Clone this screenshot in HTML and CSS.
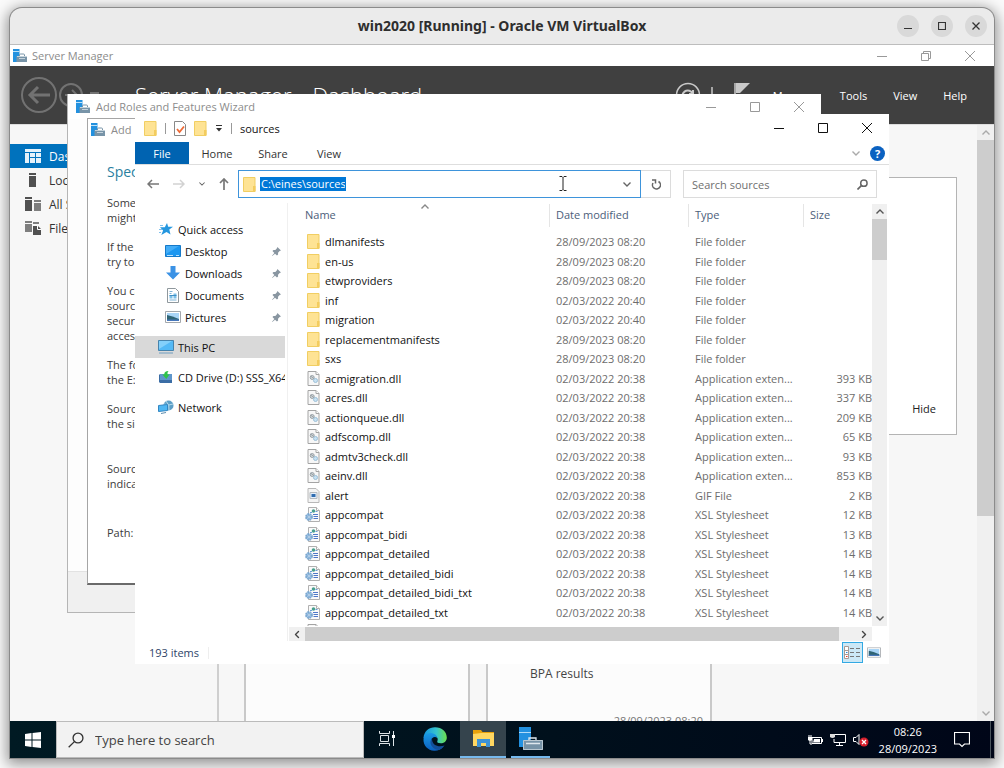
FILE: index.html
```html
<!DOCTYPE html>
<html lang="en">
<head>
<meta charset="utf-8">
<title>win2020 [Running] - Oracle VM VirtualBox</title>
<link rel="stylesheet" href="styles.css">
</head>
<body>
<svg class="sprites" aria-hidden="true">
  <symbol id="min" viewBox="0 0 10 10"><path d="M0 5.5h10" stroke="currentColor" fill="none"/></symbol>
  <symbol id="max" viewBox="0 0 10 10"><path d="M.5.5h9v9h-9z" stroke="currentColor" fill="none"/></symbol>
  <symbol id="restore" viewBox="0 0 10 10"><path d="M.5 2.5h7v7h-7zM2.500 2.500v-2h7v7h-2" stroke="currentColor" fill="none"/></symbol>
  <symbol id="close" viewBox="0 0 10 10"><path d="M0 0l10 10M10 0L0 10" stroke="currentColor" fill="none"/></symbol>
  <symbol id="server" viewBox="0 0 14 13"><path d="M0 0h6.500v13H0z" fill="#2391df"/><path d="M0 2.500h6.500" stroke="#bfe2f8"/><path d="M3.500 7h10.500v6H3.500z" fill="#7894a8"/><path d="M6.500 7.500V6q0-1 1-1h3q1 0 1 1v1.500" fill="none" stroke="#7894a8"/><path d="M4 7.500h10M6 9.500h6" stroke="#d8e2e9" stroke-width=".8"/></symbol>
  <symbol id="folder" viewBox="0 0 13 15"><path d="M.5.5h11.500v14H.5z" fill="#fee394" stroke="#f1ce62"/><path d="M10 9h2.500v5.500H10z" fill="#f3cc5e"/></symbol>
  <symbol id="dll" viewBox="0 0 12 15"><path d="M.5.500h8l3 3v11H.5z" fill="#f7f7f7" stroke="#a4a4a4"/><path d="M8.500.500v3h3" fill="#fff" stroke="#a4a4a4"/><circle cx="4.700" cy="6.500" r="2" fill="#cfd5d8" stroke="#9aa2a7"/><path d="M3 5l4 3" stroke="#9aa2a7"/><circle cx="8" cy="9.500" r="2" fill="#c7e1f2" stroke="#9dc0d8"/></symbol>
  <symbol id="gif" viewBox="0 0 12 15"><path d="M.5.500h8l3 3v11H.5z" fill="#f4f4f4" stroke="#b8b8b8"/><path d="M2.500 4.500h7v6h-7z" fill="#e4eefa" stroke="#b4babf"/><path d="M4 6h4v3H4z" fill="#2f6cb0"/></symbol>
  <symbol id="xsl" viewBox="0 0 15 15"><path d="M3.500.500h8l3 3v11h-11z" fill="#fafafa" stroke="#b0b0b0"/><path d="M11.500.500v3h3" fill="#fff" stroke="#b0b0b0"/><circle cx="8.500" cy="4" r="1.800" fill="#4aa08f"/><path d="M5 5.500h2M10.500 4.500h2" stroke="#6a9fd6"/><path d="M8 7.500h5M8.500 9.500h4.500M8.500 11.500h4.500" stroke="#4f78c8"/><circle cx="4" cy="10" r="3" fill="#a9ccea" stroke="#7ba7d0" stroke-width="1.800" stroke-dasharray="1.800 .6"/><circle cx="4" cy="10" r="1.300" fill="#eef6fc" stroke="#5e93c6" stroke-width=".7"/></symbol>
  <symbol id="pin" viewBox="0 0 10 10"><path d="M6 0l4 4-1.500.5-1.800 1.800.1 2L5.500 9.500 3.400 7.400.3 10 0 9.700l2.600-3.100L.5 4.500 1.700 3.200l2 .1L5.500 1.500z" fill="#8996a1"/></symbol>
  <symbol id="star" viewBox="0 0 14 12"><path d="M8 0l1.200 3.700H14L10.300 6.500l1.200 5-4-2.600L2.300 12l1.800-4.500L1 4.300h4.800z" fill="#2597df"/><path d="M1 2.500h3M0 6.500h3M0 9.500h2" stroke="#7fc0ed"/></symbol>
  <symbol id="desk" viewBox="0 0 16 12"><path d="M.5.500h15v11H.5z" fill="#1c97f0" stroke="#1679c8"/><path d="M1 1h13L1 9z" fill="#43adf7"/><path d="M2 10.500h6M11 10.500h3" stroke="#b9e1ff"/></symbol>
  <symbol id="down" viewBox="0 0 14 14"><path d="M4.500 0h5v6.500H14l-7 7-7-7h4.500z" fill="#3b92e5"/></symbol>
  <symbol id="doc" viewBox="0 0 12 15"><path d="M.5.500h8l3 3v11H.5z" fill="#fff" stroke="#8f989d"/><path d="M2.500 3.500h3M2.500 5.500h2M2.500 12h7" stroke="#7fb3d6"/><path d="M2.500 7h3v3.500h-3zM6.500 5.500h3v5h-3z" fill="#7cc0e8"/><path d="M2.500 7.500h7" stroke="#3f8fc4"/></symbol>
  <symbol id="pic" viewBox="0 0 16 12"><path d="M.5.500h15v11H.5z" fill="#fff" stroke="#a3a8ad"/><path d="M2 2h12v8H2z" fill="#a9d5f7"/><path d="M2 4q5 1 12 4v2H2z" fill="#2e6474"/><path d="M2 8.500h12V10H2z" fill="#4777bb"/></symbol>
  <symbol id="pc" viewBox="0 0 16 14"><path d="M.5.500h15v10H.5z" fill="#53b9f6" stroke="#4683ac"/><path d="M1 1h13L1 9z" fill="#83d0fb"/><path d="M1 13h14" stroke="#6f9dc0"/></symbol>
  <symbol id="cd" viewBox="0 0 14 12"><path d="M1 3h12v9H1z" fill="#5f96cb"/><path d="M0 4l1-1v9l-1-1zM1 9h12v3H1z" fill="#3b6da5"/><path d="M9.500 0Q5 0 5.300 3.500H3.300l4 4.500 3.200-4.500H8.500Q8 1.500 9.500 0z" fill="#2fc347"/></symbol>
  <symbol id="net" viewBox="0 0 16 14"><circle cx="10.500" cy="5.500" r="5" fill="#5d9fc7"/><path d="M8 1q4 4 3 9M6 4q5 2 9 0" stroke="#b7dced" fill="none"/><path d="M.5 5.500l9-1v6l-9 1z" fill="#4fb7f3" stroke="#3286c2"/><path d="M3 13.500l5-1" stroke="#5e8dae"/></symbol>
  <symbol id="chev" viewBox="0 0 8 5"><path d="M.5.500L4 4 7.500.500" fill="none" stroke="currentColor" stroke-width="1.400"/></symbol>
  <symbol id="lens" viewBox="0 0 12 12"><circle cx="7.500" cy="4.500" r="3.700" fill="none" stroke="currentColor"/><path d="M4.800 7.200L.5 11.500" stroke="currentColor"/></symbol>
</svg>

<div class="vm">
  <header class="vm-bar">
    <h1>win2020 [Running] - Oracle VM VirtualBox</h1>
    <div class="vm-controls">
      <button aria-label="Minimize"><svg width="8" height="8" viewBox="0 0 8 8"><path d="M0 6.500h8" stroke="#333"/></svg></button>
      <button aria-label="Maximize"><svg width="8" height="8" viewBox="0 0 8 8"><path d="M.5.500h7v7h-7z" stroke="#333" fill="none" stroke-width="1.200"/></svg></button>
      <button aria-label="Close"><svg width="8" height="8" viewBox="0 0 8 8"><path d="M.5.500l7 7M7.500.500l-7 7" stroke="#333" stroke-width="1.300"/></svg></button>
    </div>
  </header>

  <div class="guest">
    <section class="manager">
      <div class="bar manager-bar">
        <svg width="14" height="13"><use href="#server"/></svg><span class="bar-name">Server Manager</span>
        <div class="controls pale">
          <button aria-label="Minimize"><svg><use href="#min"/></svg></button>
          <button aria-label="Restore"><svg><use href="#restore"/></svg></button>
          <button aria-label="Close"><svg><use href="#close"/></svg></button>
        </div>
      </div>
      <div class="banner">
        <svg class="backs" width="84" height="38" viewBox="0 0 84 38" fill="none" stroke="#727272" stroke-width="2"><circle cx="19" cy="19" r="17"/><path d="M30 19H10M18 11l-8 8 8 8" stroke-width="3"/><circle cx="51" cy="19" r="11"/><path d="M45 19h12M52 14l5 5-5 5"/><path d="M70 17h9" stroke-width="2"/></svg>
        <div class="crumbs"><span>Server Manager</span><span class="dot">▸</span><span>Dashboard</span></div>
        <svg class="tools" width="76" height="28" viewBox="0 0 76 28" fill="none" stroke="#c9c9c9" stroke-width="1.500"><circle cx="13" cy="14" r="11.500"/><path d="M18 13a5.500 5.500 0 1 0 0 4M18 9v4h-4" stroke-width="2"/><path d="M37 6v16"/><path d="M60 2v22"/><path d="M61 2h14L65 12h-4z" fill="#c9c9c9" stroke="none"/></svg>
        <nav class="menu"><button>Manage</button><button>Tools</button><button>View</button><button>Help</button></nav>
      </div>
      <div class="manager-body">
        <nav class="side">
          <button class="on"><svg viewBox="0 0 16 14"><path d="M0 0h16v3H0zM0 4h4v10H0zM5 4h5v4H5zM11 4h5v4h-5zM5 9h5v5H5zM11 9h5v5h-5z" fill="#e4f1fa"/></svg>Dashboard</button>
          <button><svg viewBox="0 0 16 14"><path d="M4 0h7v2H4zM4 3h7v11H4z" fill="#505050"/></svg>Local Server</button>
          <button><svg viewBox="0 0 16 14"><path d="M0 0h7v2H0zM0 3h7v11H0z" fill="#505050"/><path d="M9 3h7v2H9zM9 6h7v8H9z" fill="#7e7e7e"/></svg>All Servers</button>
          <button><svg viewBox="0 0 16 14"><path d="M0 0h7v2H0zM0 3h7v8H0zM8 1h6v2H8z" fill="#7e7e7e"/><path d="M8 5h5l3 3v6H8z" fill="#505050"/><path d="M12.500 5v3.500H16" stroke="#fff" fill="none"/></svg>File and Storage</button>
        </nav>
        <div class="dash">
          <div class="welcome"><button>Hide</button></div>
          <div class="tiles">
            <div class="tile"></div>
            <div class="tile"><p>BPA results</p><time>28/09/2023 08:20</time></div>
          </div>
        </div>
        <div class="vscroll wide"><svg class="up"><use href="#chev"/></svg><i></i><b></b><svg><use href="#chev"/></svg></div>
      </div>
    </section>

    <section class="wizard">
      <div class="bar">
        <svg width="14" height="13"><use href="#server"/></svg><span class="bar-name">Add Roles and Features Wizard</span>
        <div class="controls pale">
          <button aria-label="Minimize"><svg><use href="#min"/></svg></button>
          <button aria-label="Maximize"><svg><use href="#max"/></svg></button>
          <button aria-label="Close"><svg><use href="#close"/></svg></button>
        </div>
      </div>
      <div class="wizard-body"></div>
      <div class="wizard-foot"></div>
    </section>

    <section class="source">
      <div class="bar"><svg width="14" height="13"><use href="#server"/></svg><span class="bar-name">Add</span></div>
      <div class="source-body">
        <h2>Specify</h2>
        <p>Some<br>might</p>
        <p>If the<br>try to</p>
        <p>You can<br>source<br>security<br>access</p>
        <p>The following<br>the E:</p>
        <p>Source<br>the side</p>
        <p class="apart">Source<br>indicate</p>
        <p class="path">Path:</p>
      </div>
    </section>

    <section class="explorer">
      <div class="ex-bar">
        <svg width="13" height="15"><use href="#folder"/></svg><i></i>
        <svg width="12" height="15" viewBox="0 0 12 15"><path d="M.5.500h8l3 3v11H.5z" fill="#fff" stroke="#888"/><path d="M3 8l2.500 3L10 5.500" fill="none" stroke="#ee6a36" stroke-width="1.800"/></svg>
        <svg width="13" height="15"><use href="#folder"/></svg>
        <svg width="8" height="7" viewBox="0 0 8 7"><path d="M1 .5h6" stroke="#333"/><path d="M1 3h6L4 6.500z" fill="#333"/></svg><i></i>
        <span>sources</span>
        <div class="controls">
          <button aria-label="Minimize"><svg><use href="#min"/></svg></button>
          <button aria-label="Maximize"><svg><use href="#max"/></svg></button>
          <button aria-label="Close"><svg><use href="#close"/></svg></button>
        </div>
      </div>
      <div class="ribbon">
        <button class="file">File</button><button>Home</button><button>Share</button><button>View</button>
        <svg class="expand" width="8" height="5"><use href="#chev"/></svg><button class="help" aria-label="Help">?</button>
      </div>
      <div class="nav">
        <div class="arrows">
          <svg width="12" height="10" viewBox="0 0 12 10"><path d="M12 5H1M5 1L1 5l4 4" fill="none" stroke="#777" stroke-width="1.500"/></svg>
          <svg width="12" height="10" viewBox="0 0 12 10"><path d="M0 5h11M7 1l4 4-4 4" fill="none" stroke="#d2d2d2" stroke-width="1.500"/></svg>
          <svg width="6" height="4" class="grey"><use href="#chev"/></svg>
          <svg width="10" height="12" viewBox="0 0 10 12"><path d="M5 12V1M1 5l4-4 4 4" fill="none" stroke="#777" stroke-width="1.700"/></svg>
        </div>
        <div class="address"><svg width="13" height="15"><use href="#folder"/></svg><input aria-label="Address" value="C:\eines\sources"><svg class="grey drop" width="8" height="5"><use href="#chev"/></svg>
          <svg class="cursor" width="8" height="15" viewBox="0 0 8 15"><path d="M.5.500h2.500l1 1 1-1h2.500M4 1.500v12M.5 14.500h2.500l1-1 1 1h2.500" fill="none" stroke="#222"/></svg></div>
        <button class="refresh" aria-label="Refresh"><svg width="10" height="11" viewBox="0 0 10 11"><path d="M7.500 2.500A4 4 0 1 1 2 4M1 1h3.500v3.500" fill="none" stroke="#666" stroke-width="1.500"/></svg></button>
        <div class="search"><input aria-label="Search sources" placeholder="Search sources"><svg width="11" height="11" viewBox="0 0 12 12" class="grey"><circle cx="7.500" cy="4.500" r="3.500" fill="none" stroke="currentColor" stroke-width="1.600"/><path d="M5 7L.5 11.500" stroke="currentColor" stroke-width="1.800"/></svg></div>
      </div>
      <div class="ex-main">
        <nav class="tree">
          <div><a href="#"><svg width="14" height="12"><use href="#star"/></svg>Quick access</a>
            <a href="#" class="sub"><svg width="16" height="12"><use href="#desk"/></svg>Desktop<svg class="pin"><use href="#pin"/></svg></a>
            <a href="#" class="sub"><svg width="16" height="14"><use href="#down"/></svg>Downloads<svg class="pin"><use href="#pin"/></svg></a>
            <a href="#" class="sub"><svg width="16" height="15"><use href="#doc"/></svg>Documents<svg class="pin"><use href="#pin"/></svg></a>
            <a href="#" class="sub"><svg width="16" height="12"><use href="#pic"/></svg>Pictures<svg class="pin"><use href="#pin"/></svg></a></div>
          <a href="#" class="sel"><svg width="16" height="14"><use href="#pc"/></svg>This PC</a>
          <a href="#"><svg width="14" height="12"><use href="#cd"/></svg>CD Drive (D:) SSS_X64</a>
          <a href="#"><svg width="16" height="14"><use href="#net"/></svg>Network</a>
        </nav>
        <div class="files">
          <div class="list">
            <table>
              <colgroup><col class="c-name"><col class="c-date"><col class="c-type"><col></colgroup>
              <thead><tr><th><span>Name</span><svg class="sort" width="8" height="5"><use href="#chev"/></svg></th><th><span>Date modified</span></th><th><span>Type</span></th><th><span>Size</span></th></tr></thead>
              <tbody>
                <tr><td><svg width="13" height="15"><use href="#folder"/></svg>dlmanifests</td><td>28/09/2023 08:20</td><td>File folder</td><td></td></tr>
                <tr><td><svg width="13" height="15"><use href="#folder"/></svg>en-us</td><td>28/09/2023 08:20</td><td>File folder</td><td></td></tr>
                <tr><td><svg width="13" height="15"><use href="#folder"/></svg>etwproviders</td><td>28/09/2023 08:20</td><td>File folder</td><td></td></tr>
                <tr><td><svg width="13" height="15"><use href="#folder"/></svg>inf</td><td>02/03/2022 20:40</td><td>File folder</td><td></td></tr>
                <tr><td><svg width="13" height="15"><use href="#folder"/></svg>migration</td><td>02/03/2022 20:40</td><td>File folder</td><td></td></tr>
                <tr><td><svg width="13" height="15"><use href="#folder"/></svg>replacementmanifests</td><td>28/09/2023 08:20</td><td>File folder</td><td></td></tr>
                <tr><td><svg width="13" height="15"><use href="#folder"/></svg>sxs</td><td>28/09/2023 08:20</td><td>File folder</td><td></td></tr>
                <tr><td><svg width="13" height="15"><use href="#dll"/></svg>acmigration.dll</td><td>02/03/2022 20:38</td><td>Application exten...</td><td>393 KB</td></tr>
                <tr><td><svg width="13" height="15"><use href="#dll"/></svg>acres.dll</td><td>02/03/2022 20:38</td><td>Application exten...</td><td>337 KB</td></tr>
                <tr><td><svg width="13" height="15"><use href="#dll"/></svg>actionqueue.dll</td><td>02/03/2022 20:38</td><td>Application exten...</td><td>209 KB</td></tr>
                <tr><td><svg width="13" height="15"><use href="#dll"/></svg>adfscomp.dll</td><td>02/03/2022 20:38</td><td>Application exten...</td><td>65 KB</td></tr>
                <tr><td><svg width="13" height="15"><use href="#dll"/></svg>admtv3check.dll</td><td>02/03/2022 20:38</td><td>Application exten...</td><td>93 KB</td></tr>
                <tr><td><svg width="13" height="15"><use href="#dll"/></svg>aeinv.dll</td><td>02/03/2022 20:38</td><td>Application exten...</td><td>853 KB</td></tr>
                <tr><td><svg width="13" height="15"><use href="#gif"/></svg>alert</td><td>02/03/2022 20:38</td><td>GIF File</td><td>2 KB</td></tr>
                <tr><td><svg width="15" height="15"><use href="#xsl"/></svg>appcompat</td><td>02/03/2022 20:38</td><td>XSL Stylesheet</td><td>12 KB</td></tr>
                <tr><td><svg width="15" height="15"><use href="#xsl"/></svg>appcompat_bidi</td><td>02/03/2022 20:38</td><td>XSL Stylesheet</td><td>13 KB</td></tr>
                <tr><td><svg width="15" height="15"><use href="#xsl"/></svg>appcompat_detailed</td><td>02/03/2022 20:38</td><td>XSL Stylesheet</td><td>14 KB</td></tr>
                <tr><td><svg width="15" height="15"><use href="#xsl"/></svg>appcompat_detailed_bidi</td><td>02/03/2022 20:38</td><td>XSL Stylesheet</td><td>14 KB</td></tr>
                <tr><td><svg width="15" height="15"><use href="#xsl"/></svg>appcompat_detailed_bidi_txt</td><td>02/03/2022 20:38</td><td>XSL Stylesheet</td><td>14 KB</td></tr>
                <tr><td><svg width="15" height="15"><use href="#xsl"/></svg>appcompat_detailed_txt</td><td>02/03/2022 20:38</td><td>XSL Stylesheet</td><td>14 KB</td></tr>
                <tr><td><svg width="13" height="15"><use href="#dll"/></svg></td><td></td><td></td><td></td></tr>
              </tbody>
            </table>
            <div class="vscroll"><svg class="up"><use href="#chev"/></svg><i></i><b></b><svg><use href="#chev"/></svg></div>
          </div>
          <div class="hscroll"><svg class="left"><use href="#chev"/></svg><i></i><svg class="right"><use href="#chev"/></svg></div>
        </div>
      </div>
      <footer class="status"><span>193 items</span>
        <button class="view on" aria-label="Details"><svg width="17" height="13" viewBox="0 0 17 13"><path d="M.5.500h4v12h-4zM.5 4.500h4M.5 8.500h4" fill="#fff" stroke="#a89a94"/><path d="M2 6.500h1.500" stroke="#2d83d0"/><path d="M2 10.500h1.500" stroke="#e32"/><path d="M6 2.500h4M12 2.500h4M6 6.500h4M12 6.500h4M6 10.500h4M12 10.500h4" stroke="#777"/></svg></button>
        <button class="view" aria-label="Large icons"><svg width="14" height="11" viewBox="0 0 16 12"><use href="#pic"/></svg></button>
      </footer>
    </section>

    <footer class="taskbar">
      <button class="start" aria-label="Start"><svg width="16" height="16" viewBox="0 0 16 16"><path d="M0 2l6.500-1v6.500H0zM7.500 1L16 0v7.500H7.500zM0 8.500h6.500V15L0 14zM7.500 8.500H16V16l-8.500-1z" fill="#fff"/></svg></button>
      <label class="finder"><svg width="16" height="16"><use href="#lens"/></svg><input aria-label="Search" placeholder="Type here to search"></label>
      <button class="task" aria-label="Task view"><svg width="16" height="15" viewBox="0 0 16 15" fill="none" stroke="#dde3e6"><path d="M.5 0v2.500h10V0M.5 15v-2.500h10V15M1.500 4.500h8v6h-8zM14.500 0v15"/><path d="M13 4h3v3h-3z" fill="#fff" stroke="none"/></svg></button>
      <button class="task" aria-label="Edge"><svg width="24" height="24" viewBox="0 0 24 24"><defs><linearGradient id="e1" x1="0" x2="1"><stop stop-color="#1694e0"/><stop offset=".55" stop-color="#35c3cf"/><stop offset="1" stop-color="#6de04b"/></linearGradient><linearGradient id="e2" y1="0" y2="1" x2="0"><stop stop-color="#1a9be5"/><stop offset="1" stop-color="#0b5fc0"/></linearGradient></defs><path d="M.5 11C1 4 6 .2 12 .2 19 .2 23.800 5 23.800 10.500c0 4-3 5.800-6 5.800-2.800 0-4-1-3.500-2 1-2 .4-5.300-3.300-5.300C6 9 2 11 .5 11z" fill="url(#e1)"/><path d="M.5 12C1 7.500 5 5.500 8.500 6c3.500.5 5.500 2.500 5.800 5-2-2-6-1-6 3 0 5 5.500 7.500 12 5.500C18 23 14.500 24 11 23.800 5 23.300 0 18.500.5 12z" fill="url(#e2)"/><path d="M9 11c-4 5 0 11 6.500 12 2.500-.7 4.500-2.200 6-4.500-5 2-13 .500-12.500-7.500z" fill="#134f9b"/></svg></button>
      <button class="task open lit" aria-label="File Explorer"><svg width="21" height="17" viewBox="0 0 21 17"><path d="M0 0h8l1.500 2H21v14H0z" fill="#e9a20c"/><path d="M0 4l8-1h13v13H0z" fill="#ffd761"/><path d="M4 9h13v8h-4v-4H8v4H4z" fill="#3d93d6"/></svg></button>
      <button class="task open" aria-label="Server Manager"><svg width="24" height="23" viewBox="0 0 24 23"><path d="M0 0h12v20H0z" fill="#2391e0"/><path d="M0 5.500h12" stroke="#b2dcf8"/><path d="M4 13h20v10H4z" fill="#7793a7"/><path d="M4.500 13.500h19v9h-19z" fill="none" stroke="#b9c7d0"/><path d="M10 13v-2h7v2M7 16.500h14" fill="none" stroke="#dfe8ee" stroke-width="1.300"/></svg></button>
      <div class="tray">
        <svg width="16" height="12" viewBox="0 0 16 12"><path d="M5 3.500h9.500v6H5z" fill="none" stroke="#fff"/><path d="M7 5h6v3.500H6zM15 5h1v3h-1zM1 3h4v3q-2 2-4 0z" fill="#fff"/><path d="M2 1v2M4 1v2M3 7v3h2" stroke="#fff" fill="none"/></svg>
        <svg width="16" height="13" viewBox="0 0 16 13"><path d="M5 1.500h10.500v8H4V6M9.500 10v2.500M6 12.500h7" fill="none" stroke="#fff"/><path d="M0 1h5v3q-2.500 2-5 0z" fill="#ddd"/></svg>
        <svg width="16" height="14" viewBox="0 0 16 14"><path d="M.5 4.500H3l3-3v10l-3-3H.5z" fill="none" stroke="#fff"/><circle cx="11" cy="9" r="4.500" fill="#d71f2c"/><path d="M9 7l4 4M13 7l-4 4" stroke="#fff" stroke-width="1.300"/></svg>
        <div class="clock"><span>08:26</span><span>28/09/2023</span></div>
        <svg width="16" height="16" viewBox="0 0 16 16"><path d="M.5.500h15v11.500h-5L8 14.500 5.500 12H.5z" fill="none" stroke="#fff" stroke-width="1.200"/></svg>
      </div>
    </footer>
  </div>
</div>
</body>
</html>
```
FILE: styles.css
```css
* { box-sizing: border-box; }
body {
  margin: 0; height: 100vh; padding: 8px 10px 10px; overflow: hidden;
  background: #fafafa; color: #222;
  font: 11px/15px "Open Sans", "Noto Sans", sans-serif;
}
button { border: 0; padding: 0; margin: 0; background: none; font: inherit; color: inherit; }
input { border: 0; padding: 0; margin: 0; background: none; font: inherit; color: inherit; outline: 0; min-width: 0; }
h1, h2, p { margin: 0; }
svg { display: block; flex: none; }
.sprites { position: absolute; width: 0; height: 0; }

.vm {
  height: 100%; display: flex; flex-direction: column;
  border-radius: 12px 12px 0 0; background: #ebebeb;
  box-shadow: 0 0 0 1px #8b8b8b, 0 3px 14px 3px rgba(0, 0, 0, .42);
}
.vm-bar { height: 37px; flex: none; display: flex; align-items: center; position: relative; border-bottom: 1px solid #bdbdbd; padding-right: 7px; }
.vm-bar h1 { flex: 1; padding-left: 97px; text-align: center; font: bold 14px/20px "Noto Sans", sans-serif; color: #2e2e2e; white-space: nowrap; }
.vm-controls { display: flex; gap: 12px; }
.vm-controls button { width: 22px; height: 22px; border-radius: 50%; background: #d9d9d9; display: grid; place-items: center; }

.guest { flex: 1; min-height: 0; display: flex; flex-direction: column; position: relative; overflow: hidden; }

.bar { display: flex; align-items: center; color: #8c8c8c; white-space: nowrap; flex: none; }
.bar-name { margin-left: 5px; }
.controls { margin-left: auto; display: flex; color: #111; }
.controls button { width: 44px; height: 22px; display: grid; place-items: center; }
.controls svg { width: 10px; height: 10px; }
.controls.pale { color: #999; }

/* Server Manager */
.manager { flex: 1; min-height: 0; display: flex; flex-direction: column; background: #f7f7f7; }
.manager-bar { height: 21px; background: #fff; padding: 0 2px 0 3px; }
.banner { height: 58px; flex: none; background: #404040; color: #fff; display: flex; align-items: center; padding: 0 27px 0 10px; }
.crumbs { display: flex; align-items: center; margin-left: 31px; gap: 8px; font-size: 22px; line-height: 28px; font-weight: 300; white-space: nowrap; }
.crumbs .dot { font-size: 10px; }
.tools { margin-left: auto; }
.menu { display: flex; gap: 26px; margin-left: 22px; }
.manager-body { flex: 1; min-height: 0; display: flex; border-top: 1px solid #ddd; }
.side { width: 209px; flex: none; border-right: 2px solid #cfcfcf; padding-top: 19px; }
.side button { display: flex; align-items: center; width: 100%; height: 24px; padding-left: 15px; gap: 8px; font-size: 12px; color: #333; }
.side svg { width: 16px; height: 14px; }
.side .on { background: #0072bd; color: #fff; }
.dash { flex: 1; min-width: 0; padding: 52px 20px 0 25px; overflow: hidden; }
.welcome { height: 258px; border: 1px solid #b4b4b4; background: #fff; display: flex; align-items: flex-end; justify-content: flex-end; padding: 18px 20px; }
.tiles { display: flex; gap: 16px; margin-top: 36px; }
.tile { width: 226px; height: 300px; border: 2px solid #c9c9c9; background: #fcfcfc; padding: 192px 7px 0 42px; }
.tile p { font-size: 12px; line-height: 18px; color: #444; }
.tile time { display: block; margin-top: 30px; text-align: right; color: #777; }

.vscroll { width: 15px; flex: none; background: #f0f0f0; display: flex; flex-direction: column; align-items: center; color: #555; padding: 5px 0; }
.vscroll svg { width: 8px; height: 5px; }
.vscroll .up { transform: rotate(180deg); }
.vscroll i { width: 100%; height: 41px; margin-top: 5px; background: #cdcdcd; }
.vscroll b { flex: 1; }
.vscroll.wide { width: 17px; color: #aaa; }
.vscroll.wide i { flex: 5; height: auto; }
.vscroll.wide b { flex: 0 0 195px; }

/* Wizard windows */
.wizard { position: absolute; inset: 49px 173px 145px 57px; display: flex; flex-direction: column; background: #fdfdfd; border: solid #b5b5b5; border-width: 0 0 1px 1px; }
.wizard .bar { height: 25px; background: #fff; padding-left: 8px; }
.wizard .bar-name { margin-left: 6px; }
.wizard-body { flex: 1; }
.wizard-foot { height: 41px; border-top: 1px solid #e2e2e2; background: #f0f0f0; }
.source { position: absolute; inset: 73px 205px 173px 77px; background: #fff; border: 1px solid #a5a5a5; border-bottom: 2px solid #6a6a6a; overflow: hidden; }
.source .bar { height: 21px; padding-left: 3px; }
.source .bar-name { margin-left: 6px; }
.source-body { padding: 22px 0 0 19px; color: #3b3b3b; white-space: nowrap; }
.source h2 { font-size: 14px; line-height: 20px; font-weight: 400; color: #29809f; padding-bottom: 13px; }
.source p { margin-bottom: 14px; }
.source .apart { margin-top: 30px; }
.source .path { margin-top: 34px; }

/* File Explorer */
.explorer { position: absolute; inset: 69px 105px 94px 125px; background: #fff; color: #111; display: flex; flex-direction: column; }
.ex-bar { height: 28px; flex: none; display: flex; align-items: center; padding-left: 9px; gap: 8px; }
.ex-bar i { width: 1px; height: 11px; background: #999; }
.ribbon { height: 23px; flex: none; display: flex; align-items: center; border-bottom: 1px solid #dedede; color: #333; padding: 0 4px 0 0; }
.ribbon button { width: 56px; height: 22px; }
.ribbon .file { width: 54px; background: #0063b1; color: #fff; }
.ribbon .expand { margin-left: auto; color: #aaa; }
.ribbon .help { width: 15px; height: 15px; margin-left: 10px; border-radius: 50%; background: #0b62c1; color: #fff; font-weight: 700; line-height: 15px; }
.nav { height: 38px; flex: none; display: flex; align-items: center; padding-right: 12px; }
.arrows { width: 103px; flex: none; display: flex; align-items: center; justify-content: space-between; padding: 0 9px 0 12px; }
.grey { color: #666; }
.address { flex: 1; min-width: 0; height: 28px; border: 1px solid #3e94db; display: flex; align-items: center; padding: 0 9px 0 4px; position: relative; }
.address input { field-sizing: content; width: 86px; height: 14px; margin-left: 4px; padding: 0 1px; background: #0078d7; color: #fff; line-height: 14px; }
.drop { margin-left: auto; }
.cursor { position: absolute; right: 73px; top: 5px; }
.refresh { width: 30px; height: 28px; border: 1px solid #dcdcdc; border-left: 0; display: grid; place-items: center; }
.search { width: 194px; height: 28px; margin-left: 12px; border: 1px solid #dcdcdc; display: flex; align-items: center; padding: 0 8px; }
.search input { flex: 1; }
input::placeholder { color: #707070; opacity: 1; }
.ex-main { flex: 1; min-height: 0; display: flex; }
.tree { width: 153px; flex: none; border-right: 1px solid #f0f0f0; padding: 15px 2px 0 0; display: flex; flex-direction: column; gap: 8px; }
.tree a { display: flex; align-items: center; height: 22px; padding-left: 23px; gap: 4px; color: inherit; text-decoration: none; white-space: nowrap; overflow: hidden; }
.tree a svg:first-child { width: 16px; }
.tree .sub { padding-left: 30px; }
.tree .pin { width: 9px; height: 9px; margin-left: auto; margin-right: 4px; }
.tree .sel { background: #d9d9d9; }
.files { flex: 1; min-width: 0; display: flex; flex-direction: column; padding: 1px 2px 0 1px; }
.list { flex: 1; min-height: 0; display: flex; overflow: hidden; align-items: stretch; }
table { flex: 1; min-width: 0; table-layout: fixed; border-collapse: collapse; color: #6d6d6d; align-self: flex-start; }
.c-name { width: 260px; }
.c-date { width: 139px; }
.c-type { width: 115px; }
th { height: 28px; padding: 0; vertical-align: top; text-align: left; font-weight: 400; color: #4c607a; position: relative; }
th span { display: block; height: 23px; padding-left: 6px; line-height: 22px; border-left: 1px solid #e5e5e5; }
th:first-child span { padding-left: 16px; border: 0; }
.sort { position: absolute; left: 132px; top: 0; transform: rotate(180deg); color: #888; }
td { padding: 0 0 0 7px; height: 20px; line-height: 15px; white-space: nowrap; }
tr:nth-child(odd) td { height: 19px; }
td:first-child { display: flex; align-items: center; gap: 4px; padding-left: 18px; color: #111; }
td:first-child svg { margin-right: 1px; }
td:first-child svg[width="15"] { margin-left: -2px; }
td:last-child { text-align: right; padding: 0; }
.hscroll { height: 14px; flex: none; margin: 1px 15px 0 0; background: #f0f0f0; display: flex; align-items: center; padding: 0 4px; color: #444; }
.hscroll svg { width: 8px; height: 5px; }
.hscroll .left { transform: rotate(90deg); }
.hscroll .right { transform: rotate(-90deg); }
.hscroll i { flex: 1; height: 14px; margin: 0 21px 0 4px; background: #cdcdcd; }
.status { height: 23px; flex: none; display: flex; align-items: center; padding: 0 5px 0 14px; color: #2e4468; }
.status span { margin-right: auto; padding-right: 9px; border-right: 1px solid #eee; line-height: 12px; }
.view { width: 21px; height: 21px; display: grid; place-items: center; }
.view.on { background: #cce8f6; border: 1px solid #33a9e3; }

/* Taskbar */
.taskbar { height: 37px; flex: none; display: flex; background: linear-gradient(90deg, #001a23, #00101c 55%, #000618); color: #fff; }
.start { width: 46px; display: grid; place-items: center; }
.finder { width: 308px; background: #f2f2f2; border: 1px solid #bbb; display: flex; align-items: center; gap: 11px; padding-left: 11px; color: #333; }
.finder input { flex: 1; font-size: 13px; line-height: 20px; }
.finder input::placeholder { color: #444; }
.task { width: 46px; display: grid; place-items: center; border-bottom: 2px solid transparent; margin-right: 2px; }
.task.open { border-bottom-color: #76b9ed; }
.task.lit { background: #35444d; }
.task:last-of-type { width: 39px; margin-left: 3px; }
.tray { margin-left: auto; display: flex; align-items: center; gap: 7px; padding-right: 3px; }
.tray::after { content: ""; width: 1px; height: 37px; margin-left: 13px; background: #4a545c; }
.clock { display: flex; flex-direction: column; align-items: center; line-height: 17px; margin: 0 10px 0 3px; }
```
